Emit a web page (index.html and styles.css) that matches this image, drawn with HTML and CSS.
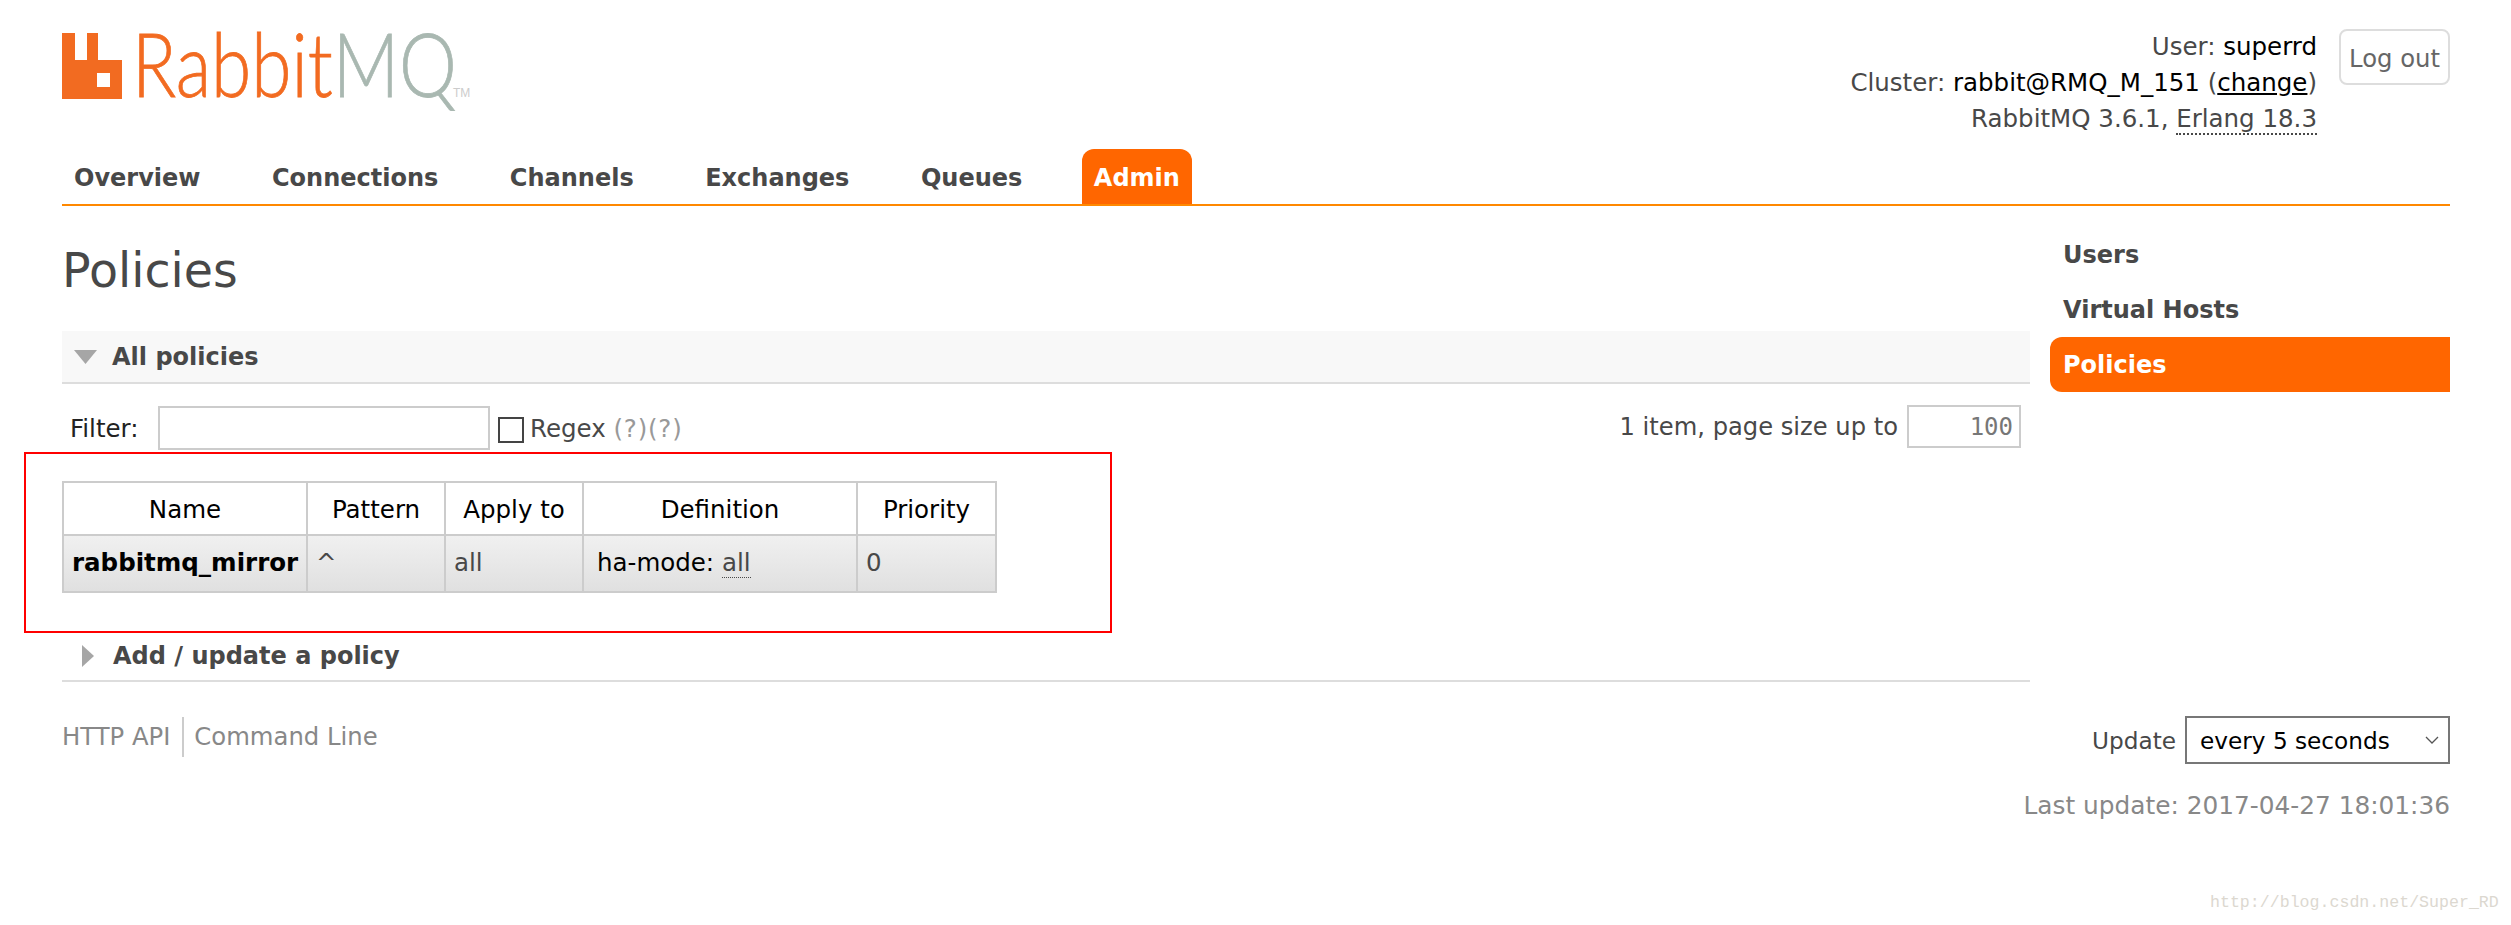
FILE: index.html
```html
<!DOCTYPE html>
<html lang="en">
<head>
<meta charset="utf-8">
<title>RabbitMQ Management</title>
<link rel="stylesheet" href="styles.css">
</head>
<body>
<div class="page">
  <header class="header">
    <div class="logo">
      <svg class="logo-mark" width="60" height="66" viewBox="0 0 60 66"><path fill="#f26b21" fill-rule="evenodd" d="M0 0H13V27H25V0H36V27H60V66H0ZM35 40V54H48V40Z"/></svg>
      <span class="logo-word">Rabbit<span class="logo-grey">MQ</span></span>
      <span class="logo-tm">TM</span>
    </div>
    <div class="status">
      <div class="status-lines">
        <p>User: <b>superrd</b></p>
        <p>Cluster: <b>rabbit@RMQ_M_151</b> (<a class="change">change</a>)</p>
        <p>RabbitMQ 3.6.1, <abbr>Erlang 18.3</abbr></p>
      </div>
      <button class="logout">Log out</button>
    </div>
  </header>
  <nav class="nav">
    <a>Overview</a><a>Connections</a><a>Channels</a><a>Exchanges</a><a>Queues</a><a class="active">Admin</a>
  </nav>
  <div class="main">
    <main class="content">
      <h1>Policies</h1>
      <section>
        <h2 class="section-head shaded">
          <svg class="tri-down" width="23" height="14" viewBox="0 0 23 14"><path fill="#a6a6a6" d="M0 0H23L11.5 14Z"/></svg>
          All policies
        </h2>
        <div class="filter-row">
          <div class="filter-left">
            <label class="filter-label">Filter:</label>
            <input class="filter-input" type="text">
            <span class="checkbox"></span>
            <span class="regex">Regex <span class="hint">(?)(?)</span></span>
          </div>
          <div class="filter-right">
            <span>1 item, page size up to</span>
            <span class="page-size">100</span>
          </div>
        </div>
        <table class="policies">
          <thead>
            <tr><th class="c-name">Name</th><th class="c-pattern">Pattern</th><th class="c-apply">Apply to</th><th class="c-def">Definition</th><th class="c-pri">Priority</th></tr>
          </thead>
          <tbody>
            <tr><td class="name">rabbitmq_mirror</td><td>^</td><td class="muted">all</td><td class="def">ha-mode: <abbr>all</abbr></td><td class="muted">0</td></tr>
          </tbody>
        </table>
      </section>
      <section>
        <h2 class="section-head add">
          <svg class="tri-right" width="12" height="22" viewBox="0 0 12 22"><path fill="#a6a6a6" d="M0 0L12 11L0 22Z"/></svg>
          Add / update a policy
        </h2>
      </section>
      <div class="foot-links"><a>HTTP API</a><a class="second">Command Line</a></div>
    </main>
    <aside class="side">
      <ul class="side-nav">
        <li>Users</li>
        <li>Virtual Hosts</li>
        <li class="active">Policies</li>
      </ul>
      <div class="update">
        <span>Update</span>
        <div class="select">every 5 seconds
          <svg width="14" height="8" viewBox="0 0 14 8"><path fill="none" stroke="#555" stroke-width="1.3" d="M1 1L7 7L13 1"/></svg>
        </div>
      </div>
      <p class="last-update">Last update: 2017-04-27 18:01:36</p>
    </aside>
  </div>
</div>
<div class="annotation"></div>
<div class="watermark">http://blog.csdn.net/Super_RD</div>
</body>
</html>
```
FILE: styles.css
```css
* { box-sizing: border-box; }
html, body { margin: 0; background: #fff; }
body {
  font-family: "DejaVu Sans", Verdana, sans-serif;
  font-size: 24.5px;
  color: #484848;
  height: 925px;
  overflow: hidden;
  position: relative;
}
p, ul, h1, h2 { margin: 0; padding: 0; }
.page { padding: 0 61px 0 62px; }

.header { display: flex; justify-content: space-between; height: 149px; }
.logo { margin-top: 33px; height: 66px; display: flex; align-items: flex-start; }
.logo-mark { display: block; flex: none; }
.logo-word {
  display: block; width: 316px; margin-left: 10px; margin-top: -3px;
  white-space: nowrap;
  font-family: Lato, sans-serif; font-weight: 300; font-size: 89px; line-height: 66px;
  color: #f26b21;
  -webkit-text-stroke: 0.8px currentColor;
  transform: scaleX(0.82);
  transform-origin: left center;
}
.logo-grey { color: #a9b8b1; }
.logo-tm { margin-left: 5px; margin-top: 54px; font-family: "Liberation Sans", sans-serif; font-size: 12px; line-height: 12px; color: #ccc; }

.status { display: flex; align-items: flex-start; padding-top: 29px; }
.status-lines { text-align: right; line-height: 36px; margin-right: 22px; }
.status-lines b { font-weight: normal; color: #000; }
.change { color: #000; text-decoration: underline; }
abbr { border-bottom: 2px dotted #484848; }
.logout {
  width: 111px; height: 56px;
  font: 24.3px "DejaVu Sans", sans-serif;
  color: #666;
  background: #fff;
  border: 2px solid #ddd;
  border-radius: 8px;
  padding: 2px 0 0;
}

.nav { display: flex; height: 57px; border-bottom: 2px solid #f80; font-weight: bold; font-size: 24px; }
.nav a { padding: 0 12px; margin-right: 47.5px; height: 55px; line-height: 58px; }
.nav a.active { background: #f60; color: #fff; border-radius: 12px 12px 0 0; margin-right: 0; }

.main { display: flex; gap: 20px; }
.content { width: 1968px; flex: none; }
.side { width: 400px; flex: none; }

h1 { font-size: 47.5px; font-weight: normal; line-height: 56px; margin-top: 37px; margin-bottom: 32px; }
.section-head { font-size: 24px; font-weight: bold; display: flex; align-items: center; border-bottom: 2px solid #ddd; }
.section-head.shaded { height: 53px; background: #f8f8f8; padding-left: 12px; gap: 15px; }
.section-head.add { height: 50px; padding-left: 20px; gap: 19px; margin-top: 39px; }

.filter-row { display: flex; justify-content: space-between; align-items: center; height: 44px; margin-top: 22px; padding-left: 8px; padding-right: 9px; }
.filter-left { display: flex; align-items: center; }
.filter-label { color: #222; width: 88px; }
.filter-input { width: 332px; height: 44px; border: 2px solid #ccc; background: #fff; padding: 0; }
.checkbox { width: 26px; height: 26px; border: 2px solid #444; margin-left: 8px; margin-top: 3px; }
.regex { margin-left: 6px; }
.hint { color: #999; letter-spacing: 0.8px; }
.filter-right { display: flex; align-items: center; gap: 9px; margin-top: -3px; font-size: 24.2px; }
.page-size { width: 114px; height: 43px; border: 2px solid #ccc; text-align: right; padding-right: 6px; line-height: 40px; color: #777; font-family: "DejaVu Sans Mono", monospace; font-size: 24px; }

.policies { border-collapse: collapse; table-layout: fixed; width: 933px; margin-top: 31px; margin-bottom: 0; }
.policies th, .policies td { border: 2px solid #ccc; padding: 0; }
.policies th { font-weight: normal; color: #000; height: 53px; text-align: center; background: #fff; padding-top: 2px; }
.policies td { height: 57px; padding-left: 8px; padding-bottom: 3px; background: linear-gradient(#f0f0f0, #e0e0e0); }
.policies td.name { font-weight: bold; color: #000; }
.policies td.def { color: #000; padding-left: 13px; }
.policies td.def abbr { color: #484848; border-bottom-width: 1px; }
.muted { color: #484848; }
.c-name { width: 244px; }
.c-pattern { width: 138px; }
.c-apply { width: 138px; }
.c-def { width: 274px; }
.c-pri { width: 139px; }

.foot-links { display: flex; align-items: center; height: 40px; margin-top: 35px; color: #888; font-size: 24.3px; }
.foot-links a { display: block; line-height: 40px; padding-right: 12px; }
.foot-links .second { border-left: 2px solid #ccc; padding-left: 10px; }

.side-nav { list-style: none; margin-top: 21px; font-weight: bold; font-size: 24px; }
.side-nav li { height: 55px; line-height: 57px; padding-left: 13px; }
.side-nav li.active { background: #f60; color: #fff; border-radius: 12px 0 0 12px; }

.update { display: flex; justify-content: flex-end; align-items: center; gap: 9px; margin-top: 324px; font-size: 23.2px; }
.select { width: 265px; height: 48px; border: 2px solid #777; display: flex; align-items: center; justify-content: space-between; padding: 0 9px 0 13px; color: #000; }
.last-update { display: flex; justify-content: flex-end; white-space: nowrap; color: #888; margin-top: 27px; font-size: 24.8px; }

.annotation { position: absolute; left: 24px; top: 452px; width: 1088px; height: 181px; border: 2px solid #f00; }
.watermark { position: absolute; left: 2210px; top: 893px; font-family: "Liberation Mono", monospace; font-size: 16.6px; color: #dcd8d0; }
```
